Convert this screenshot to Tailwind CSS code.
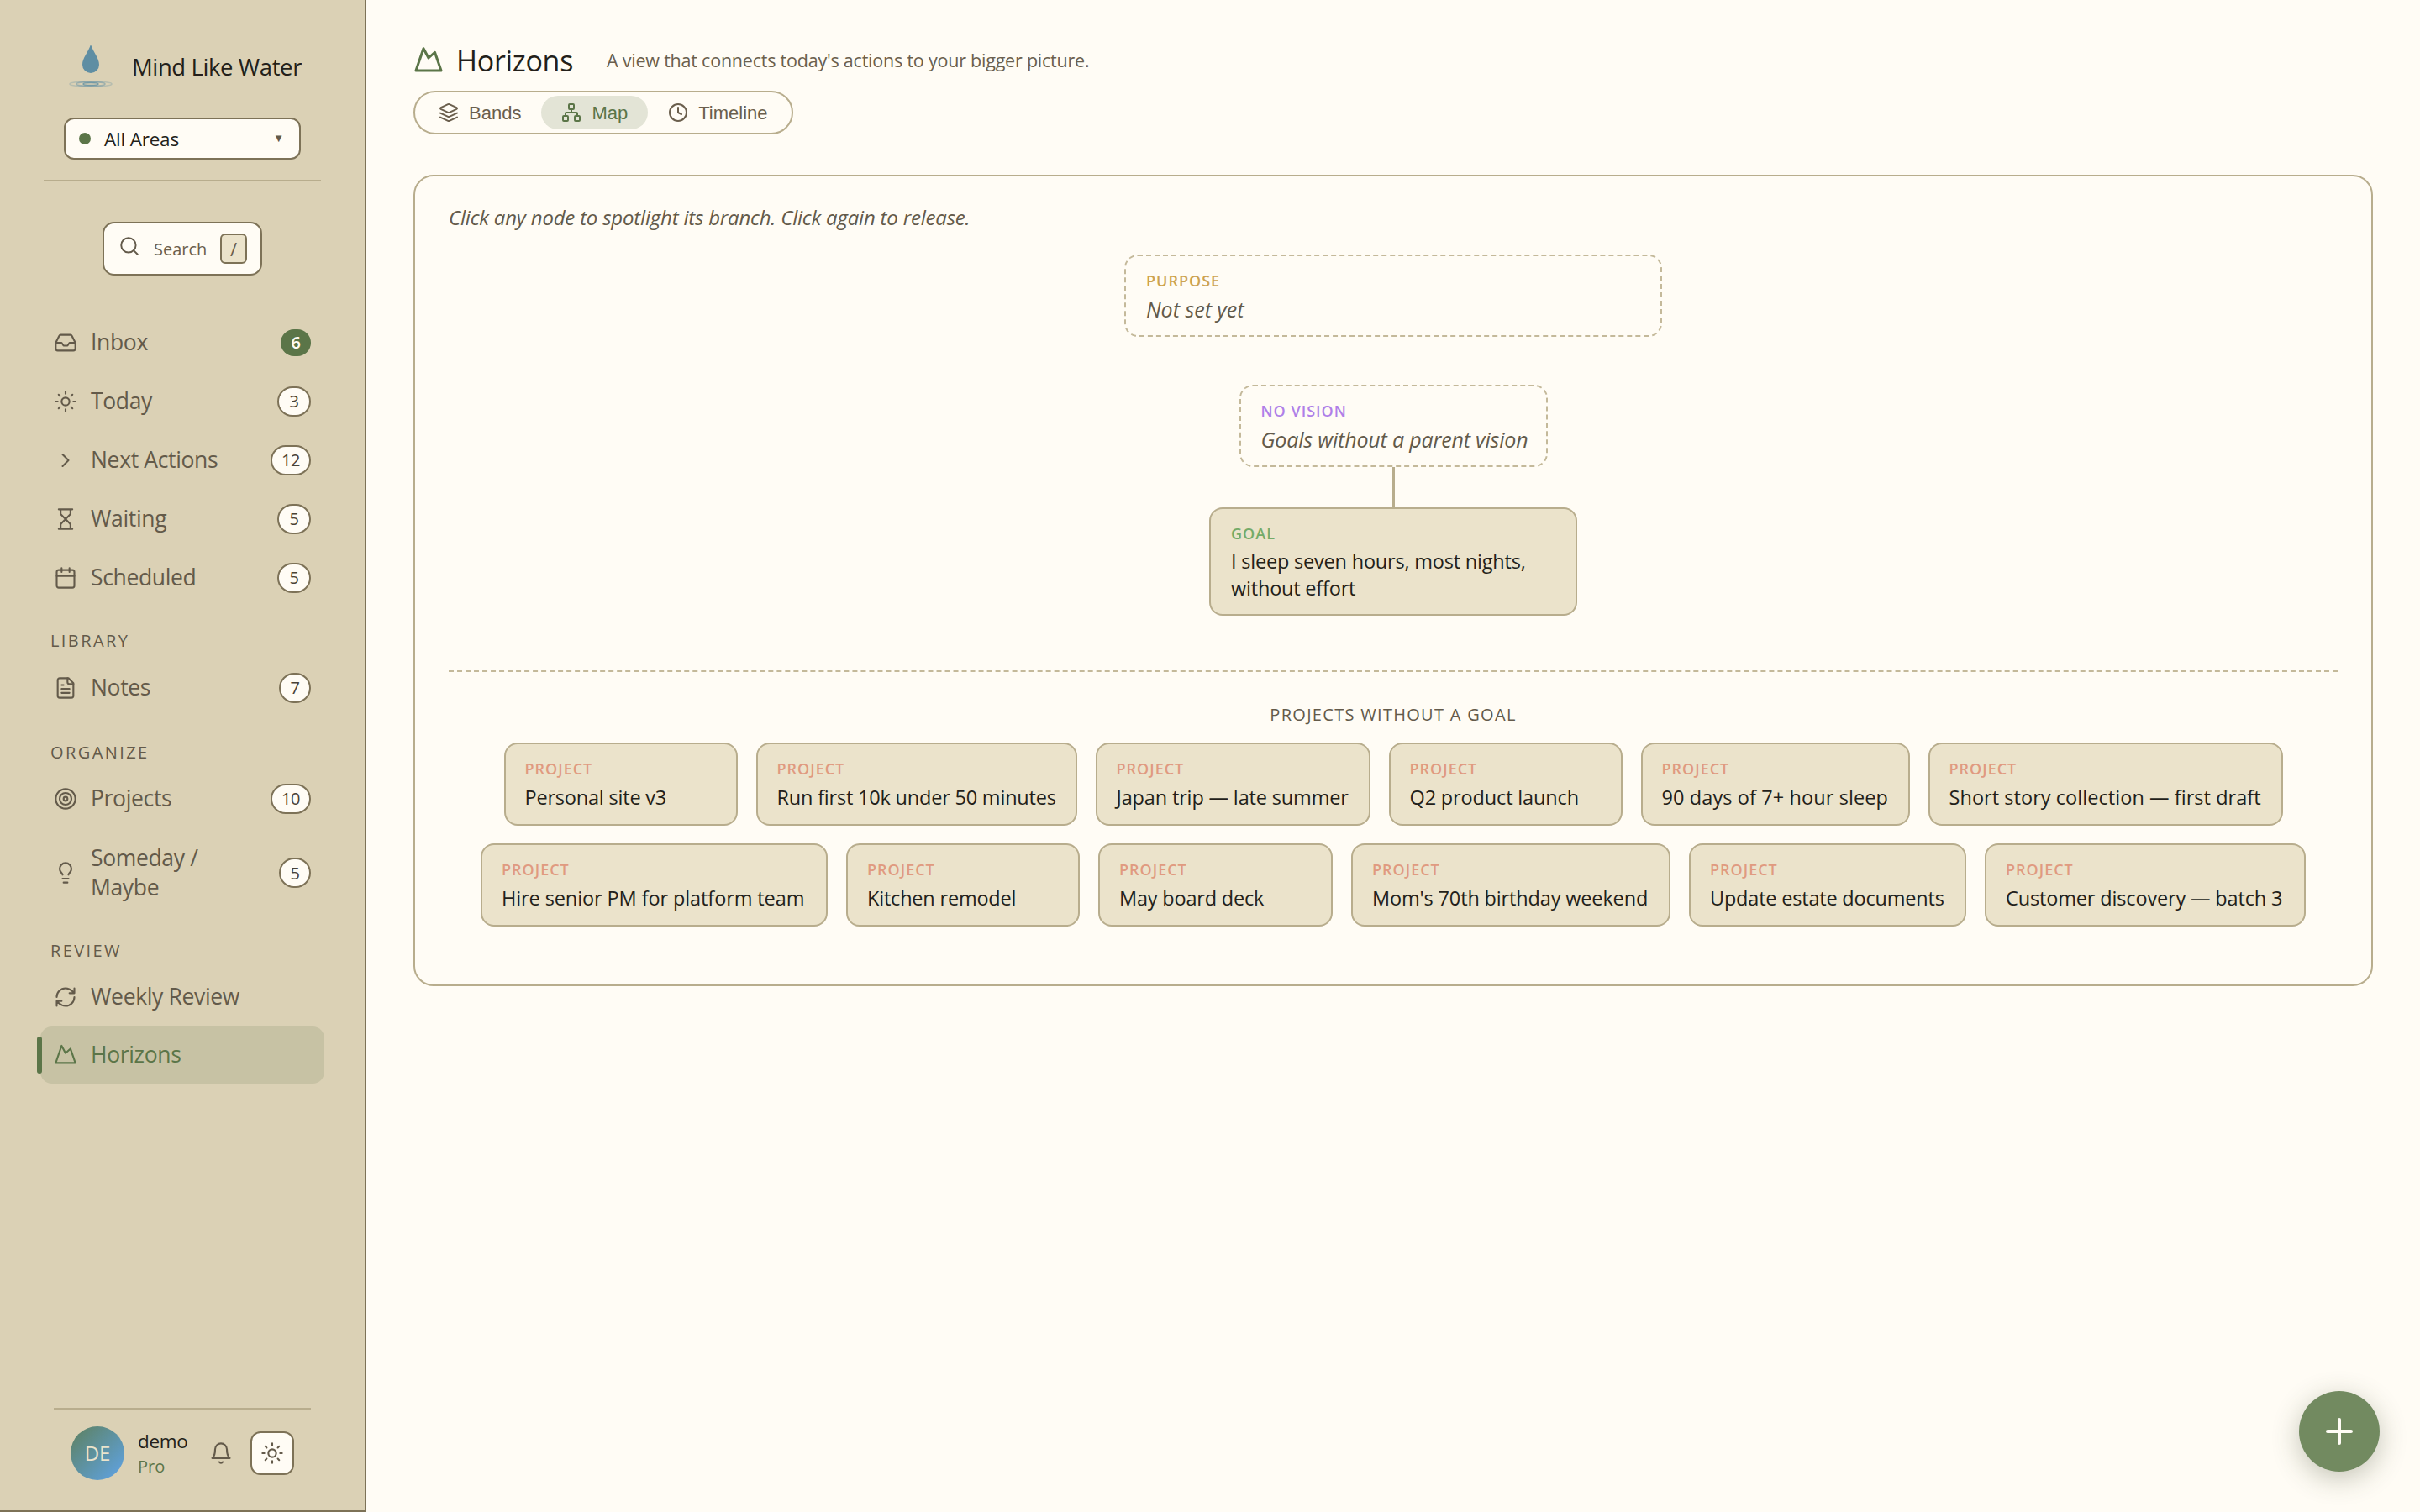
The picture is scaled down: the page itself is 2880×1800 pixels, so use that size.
<!doctype html>
<html lang="en">
<head>
<meta charset="utf-8">
<title>Horizons</title>
<script src="https://cdn.jsdelivr.net/npm/@tailwindcss/browser@4"></script>
</head>
<body class="m-0 bg-[#fffcf5] font-['Open_Sans',sans-serif]">
<div class="flex h-[1800px] w-[2880px]">
  <aside class="flex h-full w-[436px] shrink-0 flex-col border-r-2 border-b-2 border-[#7d7257] bg-[#dbd1b5]">
    <div class="flex h-[114px] items-center pl-[78px] pt-[46px]">
      <svg class="h-[66px] w-[60px]" viewBox="0 0 60 66" fill="none">
        <path d="M30 6 C33 15 40 22 40 30 A10 10 0 0 1 20 30 C20 22 27 15 30 6Z" fill="#5f8ea3"/>
        <ellipse cx="30" cy="53" rx="25" ry="3" stroke="#5f8ea3" stroke-opacity=".3" stroke-width="1.5"/>
        <ellipse cx="30" cy="53" rx="17" ry="2.5" stroke="#5f8ea3" stroke-opacity=".5" stroke-width="1.5"/>
        <ellipse cx="30" cy="53" rx="9" ry="1.5" stroke="#5f8ea3" stroke-opacity=".8" stroke-width="1.5"/>
      </svg>
      <span class="ml-[19px] text-[27.5px] font-medium tracking-[-0.4px] text-[#231f1a]">Mind Like Water</span>
    </div>
    <div class="px-[76px] pt-[26px]">
      <div class="flex h-[50px] w-[282px] items-center rounded-xl border-2 border-[#7d7257] bg-[#fffcf5] pl-[16px] pr-[18px]">
        <span class="h-[14px] w-[14px] rounded-full bg-[#5b7548]"></span>
        <span class="ml-[16px] flex-1 translate-y-[1px] text-[22.5px] font-medium tracking-[-0.2px] text-[#231f1a]">All Areas</span>
        <span class="text-[13px] text-[#635a4a]">▼</span>
      </div>
    </div>
    <div class="mx-[52px] mt-[24px] h-[2px] bg-[#b8ad8d]"></div>
    <div class="flex justify-center pt-[48px] pb-[45px]">
      <div class="flex h-[64px] w-[190px] items-center rounded-[14px] border-2 border-[#7d7257] bg-[#fffcf5] pl-[17px] pr-[16px]">
        <svg class="h-[26px] w-[26px] -translate-y-[3px] text-[#635a4a]" viewBox="0 0 24 24" fill="none" stroke="currentColor" stroke-width="1.8" stroke-linecap="round" stroke-linejoin="round"><circle cx="11" cy="11" r="8"/><path d="m21 21-4.3-4.3"/></svg>
        <span class="ml-[16px] flex-1 translate-y-[1px] text-[20px] text-[#6b5f4d]">Search</span>
        <span class="flex h-[36px] w-[32px] items-center justify-center rounded-md border-2 border-[#7d7257] bg-[#ebe3cb] text-[22px] text-[#6b5f4d]">/</span>
      </div>
    </div>
    <nav class="flex flex-col">
      <a class="flex h-[70px] items-center pl-[64px] pr-[64px] text-[26.5px] font-medium tracking-[-0.35px] text-[#635a4a]">
        <svg class="h-[28px] w-[28px]" viewBox="0 0 24 24" fill="none" stroke="currentColor" stroke-width="1.8" stroke-linecap="round" stroke-linejoin="round"><polyline points="22 12 16 12 14 15 10 15 8 12 2 12"/><path d="M5.45 5.11 2 12v6a2 2 0 0 0 2 2h16a2 2 0 0 0 2-2v-6l-3.45-6.89A2 2 0 0 0 16.76 4H7.24a2 2 0 0 0-1.79 1.11z"/></svg>
        <span class="ml-[16px] flex-1">Inbox</span>
        <span class="flex h-[32px] w-[36px] items-center justify-center rounded-full bg-[#5b7548] text-[20px] font-semibold text-[#fffcf5]">6</span>
      </a>
      <a class="flex h-[70px] items-center pl-[64px] pr-[64px] text-[26.5px] font-medium tracking-[-0.35px] text-[#635a4a]">
        <svg class="h-[28px] w-[28px]" viewBox="0 0 24 24" fill="none" stroke="currentColor" stroke-width="1.8" stroke-linecap="round" stroke-linejoin="round"><circle cx="12" cy="12" r="4"/><path d="M12 2v2M12 20v2M4.93 4.93l1.41 1.41M17.66 17.66l1.41 1.41M2 12h2M20 12h2M6.34 17.66l-1.41 1.41M19.07 4.93l-1.41 1.41"/></svg>
        <span class="ml-[16px] flex-1">Today</span>
        <span class="flex h-[36px] w-[40px] items-center justify-center rounded-full border-2 border-[#7d7257] bg-[#fffcf5] text-[20px] text-[#4a4236]">3</span>
      </a>
      <a class="flex h-[70px] items-center pl-[64px] pr-[64px] text-[26.5px] font-medium tracking-[-0.35px] text-[#635a4a]">
        <svg class="h-[28px] w-[28px]" viewBox="0 0 24 24" fill="none" stroke="currentColor" stroke-width="1.8" stroke-linecap="round" stroke-linejoin="round"><path d="m9 18 6-6-6-6"/></svg>
        <span class="ml-[16px] flex-1">Next Actions</span>
        <span class="flex h-[36px] w-[48px] items-center justify-center rounded-full border-2 border-[#7d7257] bg-[#fffcf5] text-[20px] text-[#4a4236]">12</span>
      </a>
      <a class="flex h-[70px] items-center pl-[64px] pr-[64px] text-[26.5px] font-medium tracking-[-0.35px] text-[#635a4a]">
        <svg class="h-[28px] w-[28px]" viewBox="0 0 24 24" fill="none" stroke="currentColor" stroke-width="1.8" stroke-linecap="round" stroke-linejoin="round"><path d="M5 22h14M5 2h14M17 22v-4.172a2 2 0 0 0-.586-1.414L12 12l-4.414 4.414A2 2 0 0 0 7 17.828V22M7 2v4.172a2 2 0 0 0 .586 1.414L12 12l4.414-4.414A2 2 0 0 0 17 6.172V2"/></svg>
        <span class="ml-[16px] flex-1">Waiting</span>
        <span class="flex h-[36px] w-[40px] items-center justify-center rounded-full border-2 border-[#7d7257] bg-[#fffcf5] text-[20px] text-[#4a4236]">5</span>
      </a>
      <a class="flex h-[70px] items-center pl-[64px] pr-[64px] text-[26.5px] font-medium tracking-[-0.35px] text-[#635a4a]">
        <svg class="h-[28px] w-[28px]" viewBox="0 0 24 24" fill="none" stroke="currentColor" stroke-width="1.8" stroke-linecap="round" stroke-linejoin="round"><path d="M8 2v4M16 2v4"/><rect x="3" y="4" width="18" height="18" rx="2"/><path d="M3 10h18"/></svg>
        <span class="ml-[16px] flex-1">Scheduled</span>
        <span class="flex h-[36px] w-[40px] items-center justify-center rounded-full border-2 border-[#7d7257] bg-[#fffcf5] text-[20px] text-[#4a4236]">5</span>
      </a>
      <div class="pl-[60px] pt-[25px] text-[20px] leading-[30px] font-medium tracking-[2.4px] text-[#635a4a]">LIBRARY</div>
      <a class="mt-[6px] flex h-[70px] items-center pl-[64px] pr-[64px] text-[26.5px] font-medium tracking-[-0.35px] text-[#635a4a]">
        <svg class="h-[28px] w-[28px]" viewBox="0 0 24 24" fill="none" stroke="currentColor" stroke-width="1.8" stroke-linecap="round" stroke-linejoin="round"><path d="M15 2H6a2 2 0 0 0-2 2v16a2 2 0 0 0 2 2h12a2 2 0 0 0 2-2V7Z"/><path d="M14 2v4a2 2 0 0 0 2 2h4M10 9H8M16 13H8M16 17H8"/></svg>
        <span class="ml-[16px] flex-1">Notes</span>
        <span class="flex h-[36px] w-[38px] items-center justify-center rounded-full border-2 border-[#7d7257] bg-[#fffcf5] text-[20px] text-[#4a4236]">7</span>
      </a>
      <div class="pl-[60px] pt-[27px] text-[20px] leading-[30px] font-medium tracking-[2.4px] text-[#635a4a]">ORGANIZE</div>
      <a class="mt-[5px] flex h-[70px] items-center pl-[64px] pr-[64px] text-[26.5px] font-medium tracking-[-0.35px] text-[#635a4a]">
        <svg class="h-[28px] w-[28px]" viewBox="0 0 24 24" fill="none" stroke="currentColor" stroke-width="1.8" stroke-linecap="round" stroke-linejoin="round"><circle cx="12" cy="12" r="10"/><circle cx="12" cy="12" r="6"/><circle cx="12" cy="12" r="2"/></svg>
        <span class="ml-[16px] flex-1">Projects</span>
        <span class="flex h-[36px] w-[48px] items-center justify-center rounded-full border-2 border-[#7d7257] bg-[#fffcf5] text-[20px] text-[#4a4236]">10</span>
      </a>
      <a class="flex h-[106px] items-center pl-[64px] pr-[64px] text-[26.5px] leading-[35px] font-medium tracking-[-0.35px] text-[#635a4a]">
        <svg class="h-[28px] w-[28px]" viewBox="0 0 24 24" fill="none" stroke="currentColor" stroke-width="1.8" stroke-linecap="round" stroke-linejoin="round"><path d="M15 14c.2-1 .7-1.7 1.5-2.5 1-.9 1.5-2.2 1.5-3.5A6 6 0 0 0 6 8c0 1 .2 2.2 1.5 3.5.7.7 1.3 1.5 1.5 2.5M9 18h6M10 22h4"/></svg>
        <span class="ml-[16px] flex-1">Someday /<br>Maybe</span>
        <span class="flex h-[36px] w-[38px] items-center justify-center rounded-full border-2 border-[#7d7257] bg-[#fffcf5] text-[20px] text-[#4a4236]">5</span>
      </a>
      <div class="pl-[60px] pt-[25px] text-[20px] leading-[30px] font-medium tracking-[2.4px] text-[#635a4a]">REVIEW</div>
      <a class="mt-[5px] flex h-[70px] items-center pl-[64px] pr-[64px] text-[26.5px] font-medium tracking-[-0.35px] text-[#635a4a]">
        <svg class="h-[28px] w-[28px]" viewBox="0 0 24 24" fill="none" stroke="currentColor" stroke-width="1.8" stroke-linecap="round" stroke-linejoin="round"><path d="M3 12a9 9 0 0 1 9-9 9.75 9.75 0 0 1 6.74 2.74L21 8M21 3v5h-5M21 12a9 9 0 0 1-9 9 9.75 9.75 0 0 1-6.74-2.74L3 16M8 16H3v5"/></svg>
        <span class="ml-[16px] flex-1">Weekly Review</span>
      </a>
      <a class="relative ml-[48px] mr-[48px] flex h-[68px] items-center rounded-[14px] bg-[#c7c2a4] pl-[16px] text-[26.5px] font-medium tracking-[-0.35px] text-[#5b7548]">
        <span class="absolute -left-[4px] top-[12px] h-[44px] w-[6px] rounded-full bg-[#5b7548]"></span>
        <svg class="h-[28px] w-[28px]" viewBox="0 0 24 24" fill="none" stroke="currentColor" stroke-width="1.8" stroke-linecap="round" stroke-linejoin="round"><path d="M8 2.5 12 10 17 5.5 22 20H2Z"/></svg>
        <span class="ml-[16px]">Horizons</span>
      </a>
    </nav>
    <div class="mt-auto">
      <div class="mx-[64px] h-[2px] bg-[#b8ad8d]"></div>
      <div class="flex h-[120px] items-center pb-[16px] pl-[84px]">
        <div class="flex h-[64px] w-[64px] items-center justify-center rounded-full bg-linear-to-br from-[#5d7f5c] to-[#60a3e8] text-[24px] font-medium text-[#ebe3cb]">DE</div>
        <div class="ml-[16px] flex w-[76px] flex-col">
          <span class="text-[22.5px] leading-[32px] font-medium tracking-[-0.3px] text-[#231f1a]">demo</span>
          <span class="text-[20px] leading-[28px] font-medium text-[#5b7548]">Pro</span>
        </div>
        <svg class="ml-[9px] h-[28px] w-[28px] text-[#635a4a]" viewBox="0 0 24 24" fill="none" stroke="currentColor" stroke-width="1.8" stroke-linecap="round" stroke-linejoin="round"><path d="M6 8a6 6 0 0 1 12 0c0 7 3 9 3 9H3s3-2 3-9"/><path d="M10.3 21a1.94 1.94 0 0 0 3.4 0"/></svg>
        <span class="ml-[21px] flex h-[52px] w-[52px] items-center justify-center rounded-xl border-2 border-[#7d7257] bg-[#fffcf5] text-[#635a4a]">
          <svg class="h-[28px] w-[28px]" viewBox="0 0 24 24" fill="none" stroke="currentColor" stroke-width="1.8" stroke-linecap="round" stroke-linejoin="round"><circle cx="12" cy="12" r="4"/><path d="M12 2v2M12 20v2M4.93 4.93l1.41 1.41M17.66 17.66l1.41 1.41M2 12h2M20 12h2M6.34 17.66l-1.41 1.41M19.07 4.93l-1.41 1.41"/></svg>
        </span>
      </div>
    </div>
  </aside>
  <main class="min-w-0 flex-1 pl-[56px] pr-[56px]">
    <header class="box-content flex h-[52px] items-center pt-[46px]">
      <svg class="h-[36px] w-[36px] text-[#5b7548]" viewBox="0 0 24 24" fill="none" stroke="currentColor" stroke-width="2" stroke-linecap="round" stroke-linejoin="round"><path d="M8 2.5 12 10 17 5.5 22 20H2Z"/></svg>
      <h1 class="ml-[15px] text-[34px] font-medium tracking-[-0.3px] text-[#231f1a]">Horizons</h1>
      <p class="ml-[40px] text-[21.5px] tracking-[-0.22px] text-[#6b5f4d]">A view that connects today's actions to your bigger picture.</p>
    </header>
    <div class="mt-[10px] flex h-[52px] w-[452px] items-center gap-[4px] rounded-full border-2 border-[#b8ad8d] pl-[8px] font-['Liberation_Sans',sans-serif] text-[22px] text-[#6b5f4d]">
      <span class="flex h-[40px] items-center gap-[12px] rounded-full px-[20px]"><svg class="h-[24px] w-[24px]" viewBox="0 0 24 24" fill="none" stroke="currentColor" stroke-width="2" stroke-linecap="round" stroke-linejoin="round"><path d="m12.83 2.18a2 2 0 0 0-1.66 0L2.6 6.08a1 1 0 0 0 0 1.83l8.58 3.91a2 2 0 0 0 1.66 0l8.58-3.9a1 1 0 0 0 0-1.83Z"/><path d="m22 17.65-9.17 4.16a2 2 0 0 1-1.66 0L2 17.65"/><path d="m22 12.65-9.17 4.16a2 2 0 0 1-1.66 0L2 12.65"/></svg>Bands</span>
      <span class="flex h-[40px] items-center gap-[12px] rounded-full bg-[#e3e4d6] px-[24px] text-[#5b7548]"><svg class="h-[24px] w-[24px]" viewBox="0 0 24 24" fill="none" stroke="currentColor" stroke-width="2" stroke-linecap="round" stroke-linejoin="round"><rect x="16" y="16" width="6" height="6" rx="1"/><rect x="2" y="16" width="6" height="6" rx="1"/><rect x="9" y="2" width="6" height="6" rx="1"/><path d="M5 16v-3a1 1 0 0 1 1-1h12a1 1 0 0 1 1 1v3M12 12V8"/></svg>Map</span>
      <span class="flex h-[40px] items-center gap-[12px] rounded-full px-[20px]"><svg class="h-[24px] w-[24px]" viewBox="0 0 24 24" fill="none" stroke="currentColor" stroke-width="2" stroke-linecap="round" stroke-linejoin="round"><circle cx="12" cy="12" r="10"/><path d="M12 6v6l4 2"/></svg>Timeline</span>
    </div>
    <section class="mt-[48px] h-[966px] rounded-[24px] border-2 border-[#b8ad8d] px-[40px] pt-[33px]">
      <p class="text-[24px] leading-[32px] tracking-[-0.2px] italic text-[#635a4a]">Click any node to spotlight its branch. Click again to release.</p>
      <div class="mt-[28px] flex flex-col items-center">
        <div class="h-[98px] w-[640px] rounded-2xl border-2 border-dashed border-[#c4b99a] px-[24px] pt-[16px]">
          <div class="text-[18px] leading-[26px] font-semibold tracking-[1px] text-[#cda350]">PURPOSE</div>
          <div class="mt-[3px] text-[25px] leading-[36px] font-medium italic text-[#635a4a]">Not set yet</div>
        </div>
        <div class="mt-[57px] h-[98px] w-[367px] rounded-2xl border-2 border-dashed border-[#c4b99a] px-[24px] pt-[16px]">
          <div class="text-[18px] leading-[26px] font-semibold tracking-[1px] text-[#b07fe8]">NO VISION</div>
          <div class="mt-[3px] whitespace-nowrap text-[25px] leading-[36px] font-medium tracking-[-0.17px] italic text-[#635a4a]">Goals without a parent vision</div>
        </div>
        <div class="h-[48px] w-[3px] bg-[#b8ad8d]"></div>
        <div class="h-[129px] w-[438px] rounded-2xl border-2 border-[#b8ad8d] bg-[#ebe3cb] px-[24px] pt-[16px]">
          <div class="text-[18px] leading-[26px] font-semibold tracking-[1px] text-[#74ab68]">GOAL</div>
          <div class="mt-[4px] text-[23.5px] leading-[32px] font-medium tracking-[-0.2px] text-[#231f1a]">I sleep seven hours, most nights,<br>without effort</div>
        </div>
      </div>
      <div class="mt-[65px] border-t-2 border-dashed border-[#c4b99a]"></div>
      <div class="mt-[36px] text-center text-[20px] leading-[30px] font-medium tracking-[1.3px] text-[#635a4a]">PROJECTS WITHOUT A GOAL</div>
      <div class="mt-[18px] flex justify-center gap-[22px]">
        <div class="h-[99px] w-[278px] rounded-2xl border-2 border-[#b8ad8d] bg-[#ebe3cb] px-[23px] pt-[16px]"><div class="text-[18px] leading-[26px] font-semibold tracking-[1px] text-[#e09a80]">PROJECT</div><div class="mt-[5px] whitespace-nowrap text-[23.5px] leading-[32px] font-medium tracking-[-0.2px] text-[#231f1a]">Personal site v3</div></div>
        <div class="h-[99px] w-[382px] rounded-2xl border-2 border-[#b8ad8d] bg-[#ebe3cb] px-[23px] pt-[16px]"><div class="text-[18px] leading-[26px] font-semibold tracking-[1px] text-[#e09a80]">PROJECT</div><div class="mt-[5px] whitespace-nowrap text-[23.5px] leading-[32px] font-medium tracking-[-0.2px] text-[#231f1a]">Run first 10k under 50 minutes</div></div>
        <div class="h-[99px] w-[327px] rounded-2xl border-2 border-[#b8ad8d] bg-[#ebe3cb] px-[23px] pt-[16px]"><div class="text-[18px] leading-[26px] font-semibold tracking-[1px] text-[#e09a80]">PROJECT</div><div class="mt-[5px] whitespace-nowrap text-[23.5px] leading-[32px] font-medium tracking-[-0.15px] text-[#231f1a]">Japan trip — late summer</div></div>
        <div class="h-[99px] w-[278px] rounded-2xl border-2 border-[#b8ad8d] bg-[#ebe3cb] px-[23px] pt-[16px]"><div class="text-[18px] leading-[26px] font-semibold tracking-[1px] text-[#e09a80]">PROJECT</div><div class="mt-[5px] whitespace-nowrap text-[23.5px] leading-[32px] font-medium tracking-[-0.15px] text-[#231f1a]">Q2 product launch</div></div>
        <div class="h-[99px] w-[320px] rounded-2xl border-2 border-[#b8ad8d] bg-[#ebe3cb] px-[23px] pt-[16px]"><div class="text-[18px] leading-[26px] font-semibold tracking-[1px] text-[#e09a80]">PROJECT</div><div class="mt-[5px] whitespace-nowrap text-[23.5px] leading-[32px] font-medium tracking-[0.1px] text-[#231f1a]">90 days of 7+ hour sleep</div></div>
        <div class="h-[99px] w-[422px] rounded-2xl border-2 border-[#b8ad8d] bg-[#ebe3cb] px-[23px] pt-[16px]"><div class="text-[18px] leading-[26px] font-semibold tracking-[1px] text-[#e09a80]">PROJECT</div><div class="mt-[5px] whitespace-nowrap text-[23.5px] leading-[32px] font-medium tracking-[0.05px] text-[#231f1a]">Short story collection — first draft</div></div>
      </div>
      <div class="mt-[21px] flex justify-center gap-[22px]">
        <div class="h-[99px] w-[413px] rounded-2xl border-2 border-[#b8ad8d] bg-[#ebe3cb] px-[23px] pt-[16px]"><div class="text-[18px] leading-[26px] font-semibold tracking-[1px] text-[#e09a80]">PROJECT</div><div class="mt-[5px] whitespace-nowrap text-[23.5px] leading-[32px] font-medium tracking-[-0.1px] text-[#231f1a]">Hire senior PM for platform team</div></div>
        <div class="h-[99px] w-[278px] rounded-2xl border-2 border-[#b8ad8d] bg-[#ebe3cb] px-[23px] pt-[16px]"><div class="text-[18px] leading-[26px] font-semibold tracking-[1px] text-[#e09a80]">PROJECT</div><div class="mt-[5px] whitespace-nowrap text-[23.5px] leading-[32px] font-medium tracking-[-0.2px] text-[#231f1a]">Kitchen remodel</div></div>
        <div class="h-[99px] w-[279px] rounded-2xl border-2 border-[#b8ad8d] bg-[#ebe3cb] px-[23px] pt-[16px]"><div class="text-[18px] leading-[26px] font-semibold tracking-[1px] text-[#e09a80]">PROJECT</div><div class="mt-[5px] whitespace-nowrap text-[23.5px] leading-[32px] font-medium tracking-[-0.2px] text-[#231f1a]">May board deck</div></div>
        <div class="h-[99px] w-[380px] rounded-2xl border-2 border-[#b8ad8d] bg-[#ebe3cb] px-[23px] pt-[16px]"><div class="text-[18px] leading-[26px] font-semibold tracking-[1px] text-[#e09a80]">PROJECT</div><div class="mt-[5px] whitespace-nowrap text-[23.5px] leading-[32px] font-medium tracking-[-0.15px] text-[#231f1a]">Mom's 70th birthday weekend</div></div>
        <div class="h-[99px] w-[330px] rounded-2xl border-2 border-[#b8ad8d] bg-[#ebe3cb] px-[23px] pt-[16px]"><div class="text-[18px] leading-[26px] font-semibold tracking-[1px] text-[#e09a80]">PROJECT</div><div class="mt-[5px] whitespace-nowrap text-[23.5px] leading-[32px] font-medium tracking-[-0.2px] text-[#231f1a]">Update estate documents</div></div>
        <div class="h-[99px] w-[382px] rounded-2xl border-2 border-[#b8ad8d] bg-[#ebe3cb] px-[23px] pt-[16px]"><div class="text-[18px] leading-[26px] font-semibold tracking-[1px] text-[#e09a80]">PROJECT</div><div class="mt-[5px] whitespace-nowrap text-[23.5px] leading-[32px] font-medium tracking-[-0.15px] text-[#231f1a]">Customer discovery — batch 3</div></div>
      </div>
    </section>
  </main>
</div>
<button class="fixed bottom-[48px] right-[48px] flex h-[96px] w-[96px] items-center justify-center rounded-full bg-[#728a60] text-[#fffcf5] shadow-[0_8px_32px_rgba(60,70,40,0.3)]">
  <svg class="h-[36px] w-[36px]" viewBox="0 0 36 36" fill="none" stroke="currentColor" stroke-width="4" stroke-linecap="round"><path d="M4 18h28M18 4v28"/></svg>
</button>
</body>
</html>
